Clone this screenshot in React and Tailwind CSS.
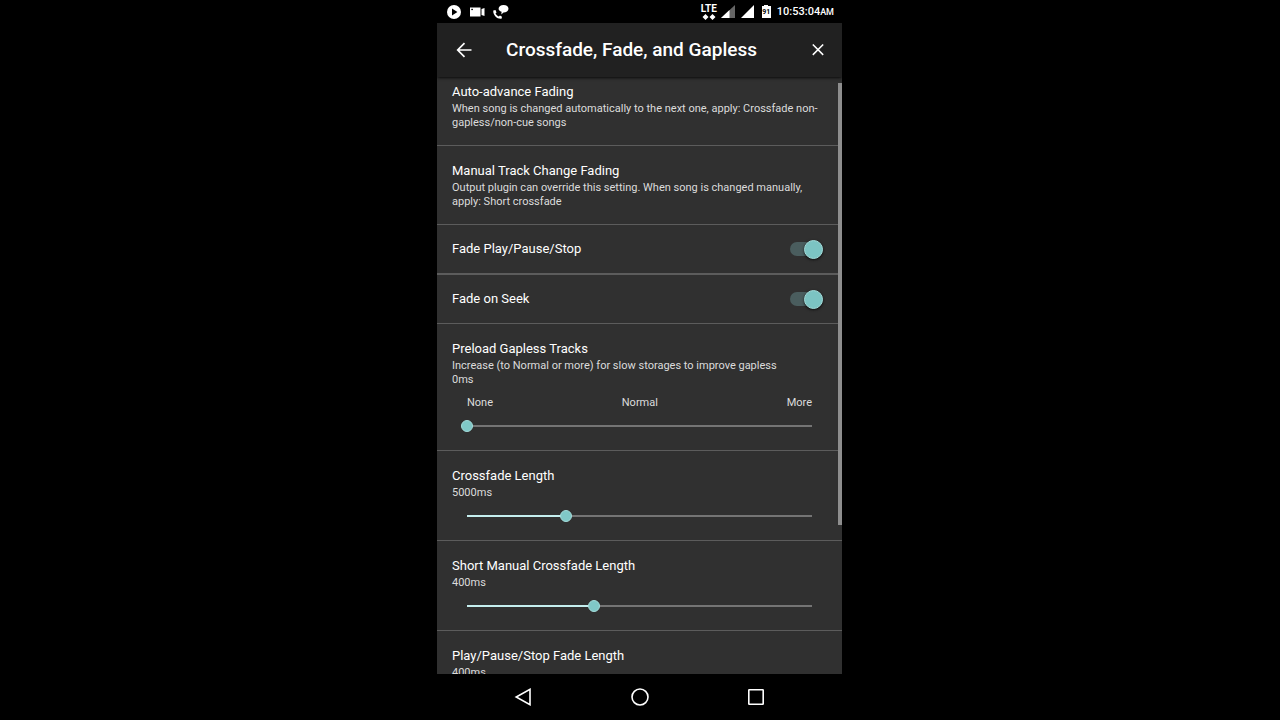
import React, { useState } from "react";

const settings = [
  {
    id: "auto",
    type: "text",
    title: "Auto-advance Fading",
    lines:
      "When song is changed automatically to the next one, apply: Crossfade non-gapless/non-cue songs",
    row: "pt-[5px] pb-[15px] border-b",
  },
  {
    id: "manual",
    type: "text",
    title: "Manual Track Change Fading",
    lines:
      "Output plugin can override this setting. When song is changed manually, apply: Short crossfade",
    row: "py-[15px] border-b",
  },
  { id: "fadePlay", type: "toggle", title: "Fade Play/Pause/Stop", row: "border-b-2" },
  { id: "fadeSeek", type: "toggle", title: "Fade on Seek", row: "border-b" },
  {
    id: "preload",
    type: "slider",
    title: "Preload Gapless Tracks",
    lines: "Increase (to Normal or more) for slow storages to improve gapless",
    labels: ["None", "Normal", "More"],
    max: 1000,
    value: 0,
  },
  { id: "crossfade", type: "slider", title: "Crossfade Length", max: 17500, value: 5000, step: 100 },
  { id: "short", type: "slider", title: "Short Manual Crossfade Length", max: 1090, value: 400 },
  { id: "stop", type: "slider", title: "Play/Pause/Stop Fade Length", max: 1090, value: 400 },
];

const titleStyle = "text-[13px] leading-5 text-white";
const subStyle = "text-[11px] leading-[14px] text-[#dcdcdc]";

const TextRow = ({ item }) => (
  <li className={`px-[15px] border-[#5c5c5c] ${item.row}`}>
    <h2 className={titleStyle}>{item.title}</h2>
    <p className={subStyle}>{item.lines}</p>
  </li>
);

const ToggleRow = ({ item }) => {
  const [on, setOn] = useState(true);
  return (
    <li className={`border-[#5c5c5c] ${item.row}`}>
      <label className="flex h-12 items-center justify-between pl-[15px] pr-[19px]">
        <span className={titleStyle}>{item.title}</span>
        <input
          type="checkbox"
          role="switch"
          checked={on}
          onChange={(e) => setOn(e.target.checked)}
          className="flex h-[14px] w-[33px] appearance-none items-center rounded-full bg-[#4a5d5e] before:size-[19px] before:shrink-0 before:rounded-full before:border before:border-[#a3dcda] before:bg-[#7cc4c3] before:shadow before:shadow-black/60 before:content-[''] checked:justify-end"
        />
      </label>
    </li>
  );
};

const SliderRow = ({ item }) => {
  const [value, setValue] = useState(item.value);
  const percent = (value / item.max) * 100;
  return (
    <li className="border-b border-[#5c5c5c] px-[15px] pt-[15px] pb-2">
      <label htmlFor={item.id} className={`block ${titleStyle}`}>
        {item.title}
      </label>
      {item.lines && <p className={subStyle}>{item.lines}</p>}
      <p className={subStyle}>{value}ms</p>
      {item.labels && (
        <div className={`mt-[9px] flex justify-between px-[15px] ${subStyle}`}>
          {item.labels.map((label) => (
            <span key={label}>{label}</span>
          ))}
        </div>
      )}
      <div className="flex h-8 items-center px-[9px]">
        <input
          id={item.id}
          type="range"
          min="0"
          max={item.max}
          step={item.step || 1}
          value={value}
          onChange={(e) => setValue(Number(e.target.value))}
          className="h-3 w-full appearance-none bg-[length:calc(100%-12px)_2px] bg-center bg-no-repeat [&::-webkit-slider-thumb]:size-3 [&::-webkit-slider-thumb]:appearance-none [&::-webkit-slider-thumb]:rounded-full [&::-webkit-slider-thumb]:border [&::-webkit-slider-thumb]:border-[#a3dcda] [&::-webkit-slider-thumb]:bg-[#80c8c7]"
          style={{
            backgroundImage: `linear-gradient(to right, #c4eeee ${percent}%, #747474 ${percent}%)`,
          }}
        />
      </div>
    </li>
  );
};

const StatusBar = () => (
  <div className="flex h-[23px] shrink-0 items-center justify-between pl-[10px] pr-2 text-white">
    <div className="flex items-center gap-2">
      <svg className="size-[14px]" viewBox="0 0 14 14">
        <circle cx="7" cy="7" r="7" fill="currentColor" />
        <path d="M5 3.6v6.8L10.4 7z" fill="#000" />
      </svg>
      <svg className="h-[14px] w-4" viewBox="0 0 16 14" fill="currentColor">
        <path d="M1 2.5h10.5v9H1zM12.5 4L15.500 3v8l-3-1z" />
        <rect x="2.3" y="3.8" width="1.6" height="1.3" fill="#000" />
      </svg>
      <svg className="h-[14px] w-4" viewBox="0 0 16 14" fill="currentColor">
        <path d="M10.5 0C13.6 0 15.500 1.400 15.500 3.800c0 2.300-2.300 3.700-5 3.700L8.300 9.400l.3-2.700C6.700 6 5.600 5 5.600 3.700 5.600 1.500 7.800 0 10.500 0z" />
        <path d="M.3 5.500l2.200-.4 1 2.500-1 1C3.400 10 4.400 10.900 5.700 11.500l1.300-1.100 2 1.300-.5 2C4 14.300-.2 10 .3 5.500z" />
      </svg>
    </div>
    <div className="flex items-center">
      <div className="flex flex-col items-center">
        <span className="text-[10px] leading-[10px] font-bold">LTE</span>
        <svg className="h-[6px] w-4" viewBox="0 0 16 6" fill="currentColor">
          <path d="M4.500 0L7.500 3l-3 3-3-3zM11.500 0l3 3-3 3-3-3z" />
        </svg>
      </div>
      <svg className="ml-1 h-[13px] w-[14px]" viewBox="0 0 14 13">
        <path d="M0 13L14 0v13z" fill="#666" />
        <path d="M0 13L8.500 5.100V13z" fill="#fff" />
      </svg>
      <svg className="ml-[6px] h-[13px] w-[13px]" viewBox="0 0 13 13">
        <path d="M0 13L13 0v13z" fill="#fff" />
      </svg>
      <div className="ml-2 flex flex-col items-center">
        <div className="h-px w-1 bg-white" />
        <div className="flex h-3 w-[9px] items-center justify-center bg-white text-[7px] font-bold text-black">
          91
        </div>
      </div>
      <p className="ml-[6px] text-[11px] leading-4 font-medium">
        10:53:04<span className="text-[9px]">AM</span>
      </p>
    </div>
  </div>
);

const Header = () => (
  <header className="z-10 flex h-[54px] shrink-0 items-center bg-[#212121] pl-[19px] pr-[18px] text-white shadow-sm shadow-black/60">
    <button aria-label="Back">
      <svg className="size-4" viewBox="0 0 16 16" fill="none" stroke="currentColor" strokeWidth="1.700">
        <path d="M15.500 8H2M8.500 1.200L1.700 8l6.800 6.800" />
      </svg>
    </button>
    <h1 className="ml-[34px] grow text-[19px] leading-6 font-medium">
      Crossfade, Fade, and Gapless
    </h1>
    <button aria-label="Close">
      <svg className="size-3" viewBox="0 0 12 12" fill="none" stroke="currentColor" strokeWidth="1.500">
        <path d="M.8.5l10.400 10.400M11.200.5L.8 10.900" />
      </svg>
    </button>
  </header>
);

const NavBar = () => (
  <nav className="flex h-[46px] shrink-0 items-center justify-between px-[77px] text-white">
    <button aria-label="Back">
      <svg className="size-[18px]" viewBox="0 0 18 18" fill="none" stroke="currentColor" strokeWidth="1.600">
        <path d="M16 1.300v15.400L2.200 9z" />
      </svg>
    </button>
    <button aria-label="Home">
      <svg className="size-[18px]" viewBox="0 0 18 18" fill="none" stroke="currentColor" strokeWidth="1.600">
        <circle cx="9" cy="9" r="8" />
      </svg>
    </button>
    <button aria-label="Recent apps">
      <svg className="size-[18px]" viewBox="0 0 18 18" fill="none" stroke="currentColor" strokeWidth="1.600">
        <rect x="1.800" y="1.800" width="14.400" height="14.400" rx=".5" />
      </svg>
    </button>
  </nav>
);

const App = () => {
  return (
    <div className="flex h-screen justify-center bg-black pr-px font-[Roboto,sans-serif]">
      <div className="flex w-full max-w-[405px] flex-col">
        <StatusBar />
        <Header />
        <main className="relative min-h-0 grow bg-[#303030]">
          <ul className="h-full overflow-y-auto [scrollbar-width:none]">
            {settings.map((item) => {
              if (item.type === "toggle") return <ToggleRow key={item.id} item={item} />;
              if (item.type === "slider") return <SliderRow key={item.id} item={item} />;
              return <TextRow key={item.id} item={item} />;
            })}
          </ul>
          <div className="absolute top-[6px] right-0 h-[74%] w-1 bg-[#8e8e8e]" />
        </main>
        <NavBar />
      </div>
    </div>
  );
};

export default App;
